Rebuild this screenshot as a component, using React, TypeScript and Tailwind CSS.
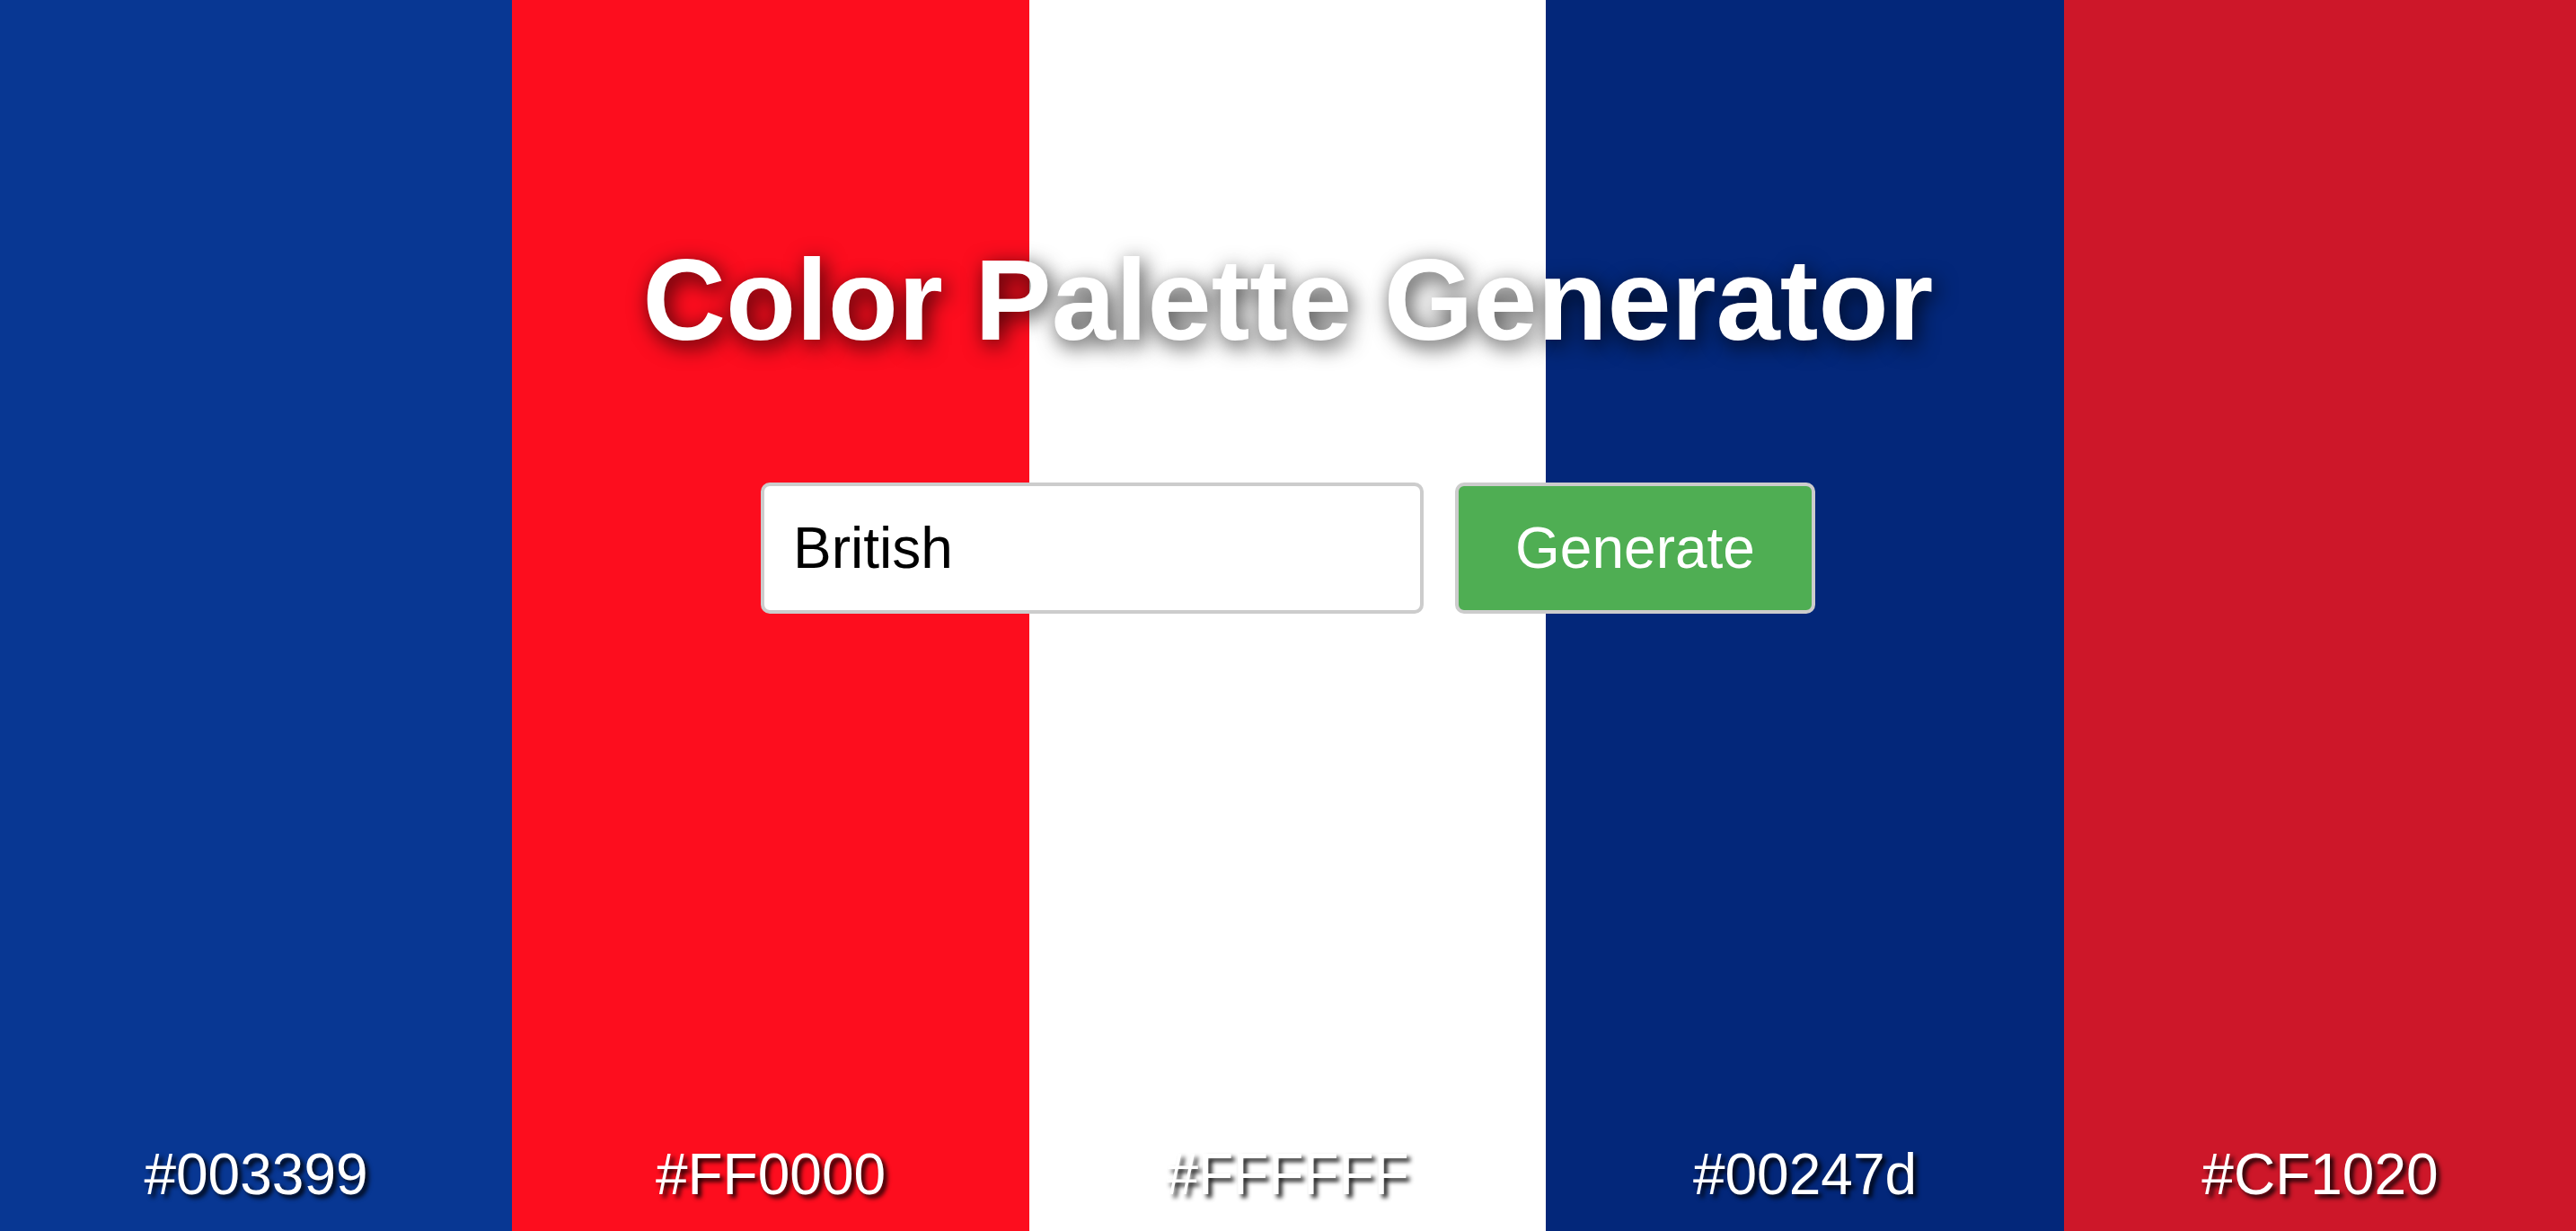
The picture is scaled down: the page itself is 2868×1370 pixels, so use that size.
import { useState } from 'react';

const palette = [
    { hex: '#003399', bg: 'bg-[#083793]' },
    { hex: '#FF0000', bg: 'bg-[#fd0d1e]' },
    { hex: '#FFFFFF', bg: 'bg-white' },
    { hex: '#00247d', bg: 'bg-[#03277a]' },
    { hex: '#CF1020', bg: 'bg-[#cd1729]' },
];

export default function App() {
    const [query, setQuery] = useState('British');

    return (
        <div className="relative h-[1370px] w-full overflow-hidden font-['Liberation_Sans',Arial,sans-serif]">
            {/* SWATCHES */}
            <div className="grid h-full grid-cols-[570px_576px_575px_577px_570px]">
                {palette.map((c) => (
                    <div key={c.hex} className={`flex items-end justify-center pb-[25px] ${c.bg}`}>
                        <span className="text-[64px] leading-[1.15] text-white [text-shadow:4px_4px_5px_rgba(0,0,0,0.9)]">
                            {c.hex}
                        </span>
                    </div>
                ))}
            </div>

            {/* HEADER + FORM */}
            <div className="absolute inset-x-0 top-0 flex flex-col items-center pt-[260px]">
                <h1 className="text-[128px] font-bold leading-[1.15] text-white [text-shadow:4px_6px_24px_rgba(0,0,0,0.8)]">
                    Color Palette Generator
                </h1>

                <div className="mt-[130px] flex items-center gap-[35px]">
                    <input
                        value={query}
                        onChange={(e) => setQuery(e.target.value)}
                        className="h-[146px] w-[738px] rounded-[10px] border-4 border-[#cccccc] bg-white px-[32px] text-[64px] text-black outline-none"
                    />
                    <button className="h-[146px] w-[401px] rounded-[10px] border-4 border-[#cccccc] bg-[#4fae53] text-[64px] text-white">
                        Generate
                    </button>
                </div>
            </div>
        </div>
    );
}
